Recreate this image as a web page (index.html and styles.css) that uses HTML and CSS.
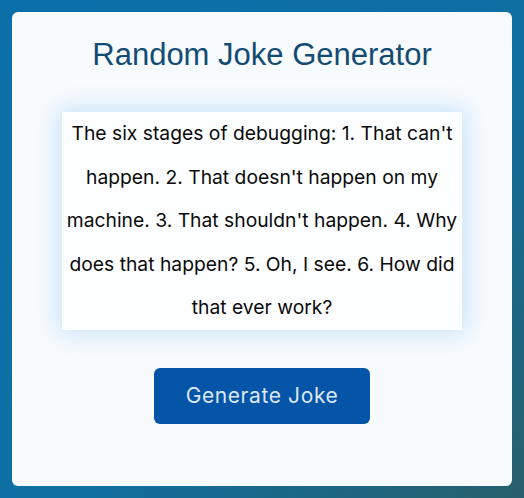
FILE: index.html
```html
<!DOCTYPE html>
<html lang="en">
<head>
<meta charset="utf-8">
<title>Random Joke Generator</title>
<link rel="stylesheet" href="styles.css">
</head>
<body>
<main class="card">
  <h1 class="title">Random Joke Generator</h1>
  <p class="joke">The six stages of debugging: 1. That can't<br>happen. 2. That doesn't happen on my<br>machine. 3. That shouldn't happen. 4. Why<br>does that happen? 5. Oh, I see. 6. How did<br>that ever work?</p>
  <button class="btn" type="button">Generate Joke</button>
</main>
</body>
</html>
```
FILE: styles.css
```css
html, body {
  margin: 0;
  height: 100%;
}
body {
  box-sizing: border-box;
  padding: 12px;
  background: linear-gradient(135deg, #0a6ea9 0%, #0e6fa2 55%, #28606b 100%);
  font-family: "Inter", "Liberation Sans", sans-serif;
}
.card {
  box-sizing: border-box;
  height: 474px;
  background: #f8fbfd;
  border-radius: 6px;
  padding: 25px 0 0;
  display: flex;
  flex-direction: column;
  align-items: center;
}
.title {
  margin: 0;
  font-family: "Liberation Sans", Arial, sans-serif;
  font-weight: 400;
  font-size: 31px;
  line-height: 36px;
  color: #134b73;
}
.joke {
  box-sizing: border-box;
  margin: 39px 0 0;
  width: 400px;
  padding: 0 2px;
  background: #fdfeff;
  box-shadow: 0 0 22px 5px rgba(30, 140, 240, 0.2);
  text-align: center;
  font-size: 19.3px;
  line-height: 43.6px;
  color: #0a0a0a;
}
.btn {
  margin-top: 38px;
  width: 216px;
  height: 56px;
  border: none;
  border-radius: 6px;
  background: #0454a8;
  color: #dce8f6;
  font-family: "Inter", "Liberation Sans", sans-serif;
  font-size: 21px;
  letter-spacing: 0.6px;
  cursor: pointer;
}
```
